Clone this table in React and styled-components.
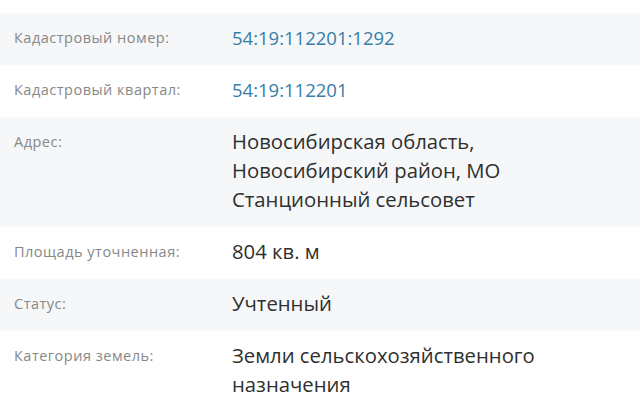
import React from 'react'
import styled, { createGlobalStyle } from 'styled-components'

const COLORS = {
  STRIPE: '#f5f7f8',
  LABEL: '#878787',
  VALUE: '#2f2f2f',
  LINK: '#367ea8',
}

const GlobalStyle = createGlobalStyle`
  body {
    margin: 0;
    background: #fff;
    font-family: "Open Sans", "Noto Sans", sans-serif;
  }
`

const rows = [
  { label: 'Тип:', value: 'Земельный участок', hidden: true },
  { label: 'Кадастровый номер:', value: '54:19:112201:1292', link: true },
  { label: 'Кадастровый квартал:', value: '54:19:112201', link: true },
  {
    label: 'Адрес:',
    value: ['Новосибирская область,', 'Новосибирский район, МО', 'Станционный сельсовет'],
  },
  { label: 'Площадь уточненная:', value: '804 кв. м' },
  { label: 'Статус:', value: 'Учтенный' },
  { label: 'Категория земель:', value: ['Земли сельскохозяйственного', 'назначения'] },
]

const App = () => (
  <>
    <GlobalStyle />
    <Table>
      {rows.map((row, i) => (
        <Row key={row.label} $striped={i % 2 === 1} $faded={row.hidden}>
          <Label>{row.label}</Label>
          <Value $link={row.link}>
            {Array.isArray(row.value)
              ? row.value.map(line => <Line key={line}>{line}</Line>)
              : row.value}
          </Value>
        </Row>
      ))}
    </Table>
  </>
)

const Table = styled.div`
  display: flex;
  flex-direction: column;
  margin-top: -39px;
  overflow: hidden;
`

const Row = styled.div`
  display: grid;
  grid-template-columns: 218px 1fr;
  padding: 10px 14px 13px;
  background: ${p => (p.$striped ? COLORS.STRIPE : '#fff')};
  opacity: ${p => (p.$faded ? 0.3 : 1)};
`

const Label = styled.div`
  font-size: 14.5px;
  letter-spacing: 0.5px;
  line-height: 29px;
  color: ${COLORS.LABEL};
`

const Value = styled.div`
  font-size: ${p => (p.$link ? '18.5px' : '20.3px')};
  line-height: 29px;
  color: ${p => (p.$link ? COLORS.LINK : COLORS.VALUE)};
`

const Line = styled.div``

export default App
